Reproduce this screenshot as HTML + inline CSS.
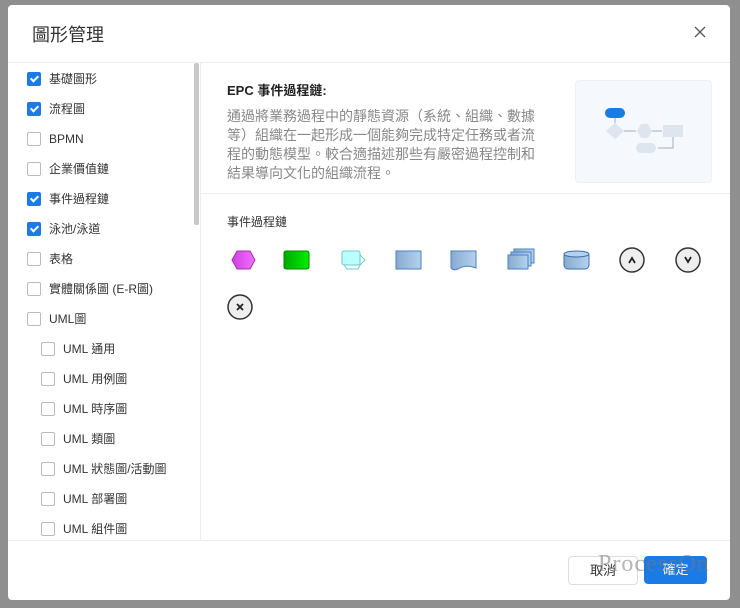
<!DOCTYPE html>
<html><head><meta charset="utf-8"><style>
body{margin:0;width:740px;height:608px;background:#8f8f8f;position:relative;overflow:hidden;font-family:"Liberation Sans","Noto Sans CJK TC",sans-serif;}
.dlg{position:absolute;left:8px;top:5px;width:722px;height:595px;background:#fff;border-radius:4px;}
.t{position:absolute;left:24px;top:16px;font-size:18px;color:#333;}
.x{position:absolute;right:24px;top:21px;}
.hl{position:absolute;left:0;top:57px;width:722px;height:1px;background:#eee}
.left{position:absolute;left:0;top:58px;width:192px;height:477px;border-right:1px solid #eee}
.sb{position:absolute;left:186px;top:58px;width:5px;height:162px;background:#c9c9c9;border-radius:2px}
.it{position:absolute;font-size:12px;color:#333;height:16px;line-height:16px}
.cb{position:absolute;left:0;top:1px;width:12px;height:12px;border:1px solid #bbb;border-radius:2px;background:#fff}
.cb.on{background:#1a7ae6;border-color:#1a7ae6}
.cb.on:after{content:"";position:absolute;left:4px;top:1px;width:3px;height:6px;border:solid #fff;border-width:0 2px 2px 0;transform:rotate(45deg)}
.lab{position:absolute;left:22px;top:0;white-space:nowrap}
.h2{position:absolute;left:219px;top:75px;font-size:13px;font-weight:bold;color:#222}
.p{position:absolute;left:219px;top:102px;width:316px;font-size:14px;line-height:19px;color:#888}
.img{position:absolute;left:567px;top:75px;width:135px;height:101px;background:#f5f8fc;border:1px solid #eef0f3;border-radius:4px}
.div{position:absolute;left:192px;top:188px;width:530px;height:1px;background:#eee}
.sub{position:absolute;left:219px;top:208px;font-size:12px;color:#333}
.fl{position:absolute;left:0;top:535px;width:722px;height:1px;background:#eee}
.b1{position:absolute;left:560px;top:551px;width:68px;height:27px;border:1px solid #ddd;border-radius:4px;font-size:13px;text-align:center;line-height:27px;color:#333}
.b2{position:absolute;left:636px;top:551px;width:63px;height:28px;background:#1a7ae6;border-radius:4px;font-size:13px;text-align:center;line-height:28px;color:#fff}
.wm{position:absolute;left:590px;top:546px;font-family:"Liberation Serif",serif;font-size:24px;color:rgba(120,120,120,.55);letter-spacing:1px}
</style></head><body>
<div class="dlg">
<div class="t">圖形管理</div>
<svg class="x" width="12" height="12" viewBox="0 0 12 12"><path d="M1,1 L11,11 M11,1 L1,11" stroke="#555" stroke-width="1.3"/></svg>
<div class="hl"></div>
<div class="left"></div><div class="sb"></div>
<div class="it" style="left:19px;top:66px"><span class="cb on"></span><span class="lab">基礎圖形</span></div>
<div class="it" style="left:19px;top:96px"><span class="cb on"></span><span class="lab">流程圖</span></div>
<div class="it" style="left:19px;top:126px"><span class="cb"></span><span class="lab">BPMN</span></div>
<div class="it" style="left:19px;top:156px"><span class="cb"></span><span class="lab">企業價值鏈</span></div>
<div class="it" style="left:19px;top:186px"><span class="cb on"></span><span class="lab">事件過程鏈</span></div>
<div class="it" style="left:19px;top:216px"><span class="cb on"></span><span class="lab">泳池/泳道</span></div>
<div class="it" style="left:19px;top:246px"><span class="cb"></span><span class="lab">表格</span></div>
<div class="it" style="left:19px;top:276px"><span class="cb"></span><span class="lab">實體關係圖 (E-R圖)</span></div>
<div class="it" style="left:19px;top:306px"><span class="cb"></span><span class="lab">UML圖</span></div>
<div class="it" style="left:33px;top:336px"><span class="cb"></span><span class="lab">UML 通用</span></div>
<div class="it" style="left:33px;top:366px"><span class="cb"></span><span class="lab">UML 用例圖</span></div>
<div class="it" style="left:33px;top:396px"><span class="cb"></span><span class="lab">UML 時序圖</span></div>
<div class="it" style="left:33px;top:426px"><span class="cb"></span><span class="lab">UML 類圖</span></div>
<div class="it" style="left:33px;top:456px"><span class="cb"></span><span class="lab">UML 狀態圖/活動圖</span></div>
<div class="it" style="left:33px;top:486px"><span class="cb"></span><span class="lab">UML 部署圖</span></div>
<div class="it" style="left:33px;top:516px"><span class="cb"></span><span class="lab">UML 組件圖</span></div>
<div class="h2">EPC 事件過程鏈:</div>
<div class="p">通過將業務過程中的靜態資源（系統、組織、數據等）組織在一起形成一個能夠完成特定任務或者流程的動態模型。較合適描述那些有嚴密過程控制和結果導向文化的組織流程。</div>
<div class="img"><svg width="135" height="101" viewBox="0 0 135 101">
<rect x="29" y="27" width="20" height="10" rx="5" fill="#1a7ae6"/>
<line x1="39" y1="37" x2="39" y2="42" stroke="#aab"/>
<polygon points="39,42 48,50 39,58 30,50" fill="#dde5ee"/>
<line x1="48" y1="50" x2="60" y2="50" stroke="#aab"/>
<polygon points="65,43 72,43 76,50 72,57 65,57 61,50" fill="#dde5ee"/>
<line x1="76" y1="50" x2="86" y2="50" stroke="#aab"/>
<rect x="87" y="44" width="20" height="12" fill="#dde5ee"/>
<polyline points="97,56 97,67 82,67" fill="none" stroke="#aab"/>
<rect x="60" y="62" width="20" height="10" rx="5" fill="#dde5ee"/>
</svg></div>
<div class="div"></div>
<div class="sub">事件過程鏈</div>
<svg style="position:absolute;left:0;top:0" width="722" height="330">
<defs>
<linearGradient id="m" x1="0" x2="1"><stop offset="0" stop-color="#d040e0"/><stop offset="1" stop-color="#f070ff"/></linearGradient>
<linearGradient id="g" x1="0" x2="1"><stop offset="0" stop-color="#0a0"/><stop offset="1" stop-color="#0e0"/></linearGradient>
<linearGradient id="b" x1="0" x2="1"><stop offset="0" stop-color="#88aad0"/><stop offset="1" stop-color="#b4d2ee"/></linearGradient>
</defs>
<polygon points="224,255 229,246 242,246 247,255 242,264 229,264" fill="url(#m)" stroke="#a030b0"/>
<rect x="276" y="246" width="25" height="18" rx="2" fill="url(#g)" stroke="#080"/>
<rect x="334" y="246" width="18" height="14" rx="2" fill="#bff" stroke="#6cc"/>
<polyline points="352,250 357,255 352,260" fill="none" stroke="#6cc"/>
<polyline points="336,260 339,264 350,264 352,260" fill="none" stroke="#6cc"/>
<rect x="388" y="246" width="25" height="18" fill="url(#b)" stroke="#4a80c0"/>
<path d="M443,246 H468 V263 Q458,259 450,264 Q446,266 443,263 Z" fill="url(#b)" stroke="#4a80c0"/>
<rect x="506" y="244" width="20" height="14" fill="url(#b)" stroke="#4a80c0"/>
<rect x="503" y="247" width="20" height="14" fill="url(#b)" stroke="#4a80c0"/>
<path d="M500,250 H520 V264 H500 Z" fill="url(#b)" stroke="#4a80c0"/>
<rect x="556" y="247" width="25" height="17" rx="4" fill="url(#b)" stroke="#3a70b0"/>
<ellipse cx="568.5" cy="249" rx="12.5" ry="3" fill="#b4d2ee" stroke="#3a70b0"/>
<circle cx="624" cy="255" r="12" fill="#eee" stroke="#333" stroke-width="1.5"/>
<polyline points="621,258 624,253 627,258" fill="none" stroke="#222" stroke-width="1.8"/>
<circle cx="680" cy="255" r="12" fill="#eee" stroke="#333" stroke-width="1.5"/>
<polyline points="677,252 680,257 683,252" fill="none" stroke="#222" stroke-width="1.8"/>
<circle cx="232" cy="302" r="12" fill="#eee" stroke="#333" stroke-width="1.5"/>
<path d="M229,299 L235,305 M235,299 L229,305" stroke="#222" stroke-width="1.8"/>
</svg>
<div class="fl"></div>
<div class="b1">取消</div><div class="b2">確定</div>
<div class="wm">ProcessOn</div>
</div>
</body></html>
